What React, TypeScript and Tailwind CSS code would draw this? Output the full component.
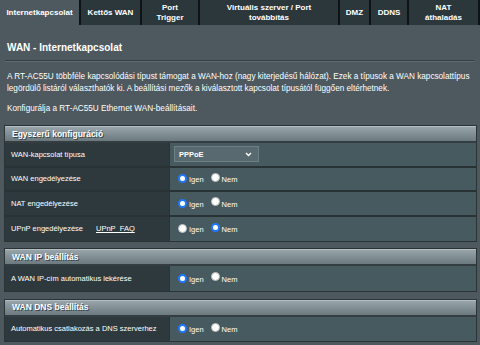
const TABS = [
  { lines: ['Internetkapcsolat'], w: 'w-[79px]', active: true },
  { lines: ['Kettős WAN'], w: 'w-[59px]' },
  { lines: ['Port', 'Trigger'], w: 'w-[56px]' },
  { lines: ['Virtuális szerver / Port', 'továbbítás'], w: 'w-[138px]' },
  { lines: ['DMZ'], w: 'w-[29px]' },
  { lines: ['DDNS'], w: 'w-[36px]' },
  { lines: ['NAT', 'áthaladás'], w: 'w-[69px]' },
];

export default function App() {
  return (
    <div className="h-[345px] w-[480px] overflow-hidden bg-[#4d595e] font-['Liberation_Sans',Arial,sans-serif] text-white">
      <TabBar />
      <div className="ml-[7px] mt-[17px] text-[10px] font-bold leading-[12px]">
        WAN - Internetkapcsolat
      </div>
      <div className="ml-[5px] mr-[6px] mt-[6px]">
        <div className="h-px bg-[#333e42]" />
        <div className="h-px bg-[#5f6b70]" />
      </div>
      <div className="ml-[7px] mt-[9px] text-[8.2px] leading-[12px]">
        <p>
          A RT-AC55U többféle kapcsolódási típust támogat a WAN-hoz (nagy
          kiterjedésű hálózat). Ezek a típusok a WAN kapcsolattípus
          legördülő listáról választhatók ki. A beállítási mezők a
          kiválasztott kapcsolat típusától függően eltérhetnek.
        </p>
        <p className="mt-[8px]">
          Konfigurálja a RT-AC55U Ethernet WAN-beállításait.
        </p>
      </div>

      <Section title="Egyszerű konfiguráció" className="mt-[10px]">
        <Row label="WAN-kapcsolat típusa">
          <Select value="PPPoE" />
        </Row>
        <Row label="WAN engedélyezése">
          <YesNo yes />
        </Row>
        <Row label="NAT engedélyezése">
          <YesNo yes />
        </Row>
        <Row
          label="UPnP engedélyezése"
          extra={
            <span className="ml-[13px] underline underline-offset-1">
              UPnP&nbsp;&nbsp;FAQ
            </span>
          }
        >
          <YesNo yes={false} />
        </Row>
      </Section>

      <Section title="WAN IP beállítás" className="mt-[6px]">
        <Row label="A WAN IP-cím automatikus lekérése">
          <YesNo yes />
        </Row>
      </Section>

      <Section title="WAN DNS beállítás" className="mt-[7px]">
        <Row label="Automatikus csatlakozás a DNS szerverhez">
          <YesNo yes />
        </Row>
      </Section>
    </div>
  );
}

function TabBar() {
  return (
    <div className="flex h-[25px] gap-[2px] bg-[#0e1315]">
      {TABS.map((t) => (
        <div
          key={t.lines[0]}
          className={`${t.w} flex flex-col items-center justify-center text-center text-[8px] font-bold leading-[10px] ${
            t.active ? 'bg-[#4d595e]' : 'bg-[#2c373b]'
          }`}
        >
          {t.lines.map((l) => (
            <span key={l} className="whitespace-nowrap">
              {l}
            </span>
          ))}
        </div>
      ))}
    </div>
  );
}

function Section({
  title,
  className,
  children,
}: {
  title: string;
  className?: string;
  children: React.ReactNode;
}) {
  return (
    <div className={`ml-[4px] mr-[3px] border border-[#2a3336] ${className}`}>
      <div className="flex h-[17px] items-center border-b-2 border-t border-b-[#343e42] border-t-[#b4bec2] bg-gradient-to-b from-[#97a4a9] to-[#6c797e] pl-[7px] text-[8.5px] font-bold [text-shadow:1px_1px_0_#39454a]">
        {title}
      </div>
      {children}
    </div>
  );
}

function Row({
  label,
  extra,
  children,
}: {
  label: string;
  extra?: React.ReactNode;
  children: React.ReactNode;
}) {
  return (
    <div className="flex h-[24.5px] border-b-2 border-[#293235] last:border-b-0">
      <div className="flex w-[165px] items-center border-r border-[#2a3336] bg-[#2e393d] pl-[6px] text-[7.5px]">
        {label}
        {extra}
      </div>
      <div className="flex flex-1 items-center bg-[#475a60] pl-[4px] text-[7.5px]">
        {children}
      </div>
    </div>
  );
}

function Select({ value }: { value: string }) {
  return (
    <div className="flex h-[16px] w-[85px] items-center justify-between border border-[#6e7f84] bg-[#586a6f] pl-[4px] pr-[6px] text-[7.5px] font-bold">
      {value}
      <svg width="7" height="5" viewBox="0 0 7 5" fill="none">
        <path d="M1 1l2.5 2.5L6 1" stroke="white" strokeWidth="1.4" />
      </svg>
    </div>
  );
}

function Radio({ on }: { on: boolean }) {
  return on ? (
    <span className="inline-block h-[9px] w-[9px] rounded-full border-2 border-[#1f78ff] bg-white" />
  ) : (
    <span className="inline-block h-[9px] w-[9px] rounded-full border border-[#b9b9b9] bg-white" />
  );
}

function YesNo({ yes }: { yes: boolean }) {
  return (
    <div className="ml-[4px] flex items-center">
      <Radio on={yes} />
      <span className="ml-[2px] mt-[2px]">Igen</span>
      <span className="ml-[7px]">
        <Radio on={!yes} />
      </span>
      <span className="ml-[2px] mt-[2px]">Nem</span>
    </div>
  );
}
